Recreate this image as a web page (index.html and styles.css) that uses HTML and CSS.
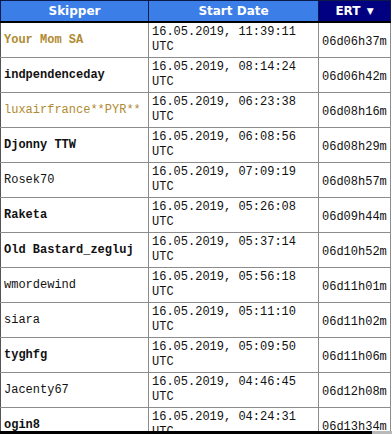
FILE: index.html
```html
<!DOCTYPE html>
<html>
<head>
<meta charset="utf-8">
<link rel="stylesheet" href="styles.css">
</head>
<body>
<div class="frame">
  <div class="viewport">
    <table class="ranking">
      <colgroup><col class="c1"><col class="c2"><col class="c3"></colgroup>
      <thead>
        <tr><th>Skipper</th><th>Start Date</th><th class="sorted">ERT <span class="arrow">&#9660;</span></th></tr>
      </thead>
      <tbody>
        <tr><td class="name b gold">Your Mom SA</td><td class="date">16.05.2019, 11:39:11 UTC</td><td class="ert">06d06h37m</td></tr>
        <tr><td class="name b">indpendenceday</td><td class="date">16.05.2019, 08:14:24 UTC</td><td class="ert">06d06h42m</td></tr>
        <tr><td class="name gold">luxairfrance**PYR**</td><td class="date">16.05.2019, 06:23:38 UTC</td><td class="ert">06d08h16m</td></tr>
        <tr><td class="name b">Djonny TTW</td><td class="date">16.05.2019, 06:08:56 UTC</td><td class="ert">06d08h29m</td></tr>
        <tr><td class="name">Rosek70</td><td class="date">16.05.2019, 07:09:19 UTC</td><td class="ert">06d08h57m</td></tr>
        <tr><td class="name b">Raketa</td><td class="date">16.05.2019, 05:26:08 UTC</td><td class="ert">06d09h44m</td></tr>
        <tr><td class="name b">Old Bastard_zegluj</td><td class="date">16.05.2019, 05:37:14 UTC</td><td class="ert">06d10h52m</td></tr>
        <tr><td class="name">wmordewind</td><td class="date">16.05.2019, 05:56:18 UTC</td><td class="ert">06d11h01m</td></tr>
        <tr><td class="name">siara</td><td class="date">16.05.2019, 05:11:10 UTC</td><td class="ert">06d11h02m</td></tr>
        <tr><td class="name b">tyghfg</td><td class="date">16.05.2019, 05:09:50 UTC</td><td class="ert">06d11h06m</td></tr>
        <tr><td class="name">Jacenty67</td><td class="date">16.05.2019, 04:46:45 UTC</td><td class="ert">06d12h08m</td></tr>
        <tr><td class="name b">ogin8</td><td class="date">16.05.2019, 04:24:31 UTC</td><td class="ert">06d13h34m</td></tr>
      </tbody>
    </table>
  </div>
  <div class="bottom"><div class="bar-dark"></div><div class="bar-light"></div></div>
</div>
</body>
</html>
```
FILE: styles.css
```css
html, body {
  margin: 0;
  padding: 0;
  background: #ffffff;
}
.frame {
  width: 392px;
  height: 434px;
  display: flex;
  flex-direction: column;
  overflow: hidden;
}
.viewport {
  height: 431px;
  overflow: hidden;
}
.bottom {
  height: 3px;
  display: flex;
}
.bar-dark {
  width: 372px;
  background: #000;
}
.bar-light {
  flex: 1;
  background: #b9b9b9;
}
.ranking {
  border-collapse: collapse;
  table-layout: fixed;
  width: 390px;
  font-family: "Liberation Mono", "DejaVu Sans Mono", monospace;
  font-size: 12px;
  color: #111;
}
.c1 { width: 148px; }
.c2 { width: 170px; }
.c3 { width: 72px; }
.ranking th {
  height: 20px;
  padding: 0;
  background: #3b7ee8;
  color: #fff;
  font-family: "DejaVu Sans", Verdana, sans-serif;
  font-size: 12px;
  font-weight: bold;
  text-align: center;
  border: 1px solid #0b1a4a;
  border-bottom: 2px solid #000;
}
.ranking th.sorted {
  background: #000080;
}
.arrow {
  font-size: 9px;
  margin-left: 2px;
  vertical-align: 1px;
}
.ranking td {
  height: 34px;
  box-sizing: border-box;
  padding: 2px 3px 2px 3px;
  border: 1px solid #8c8c8c;
  vertical-align: middle;
  line-height: 15px;
}
.ranking td.name {
  border-left: 1px solid #555;
  white-space: nowrap;
  overflow: hidden;
}
.ranking td.b {
  font-weight: bold;
}
.ranking td.gold {
  color: #b08a32;
}
.ranking td.ert {
  padding-top: 5px;
  padding-bottom: 1px;
  white-space: nowrap;
}
```
